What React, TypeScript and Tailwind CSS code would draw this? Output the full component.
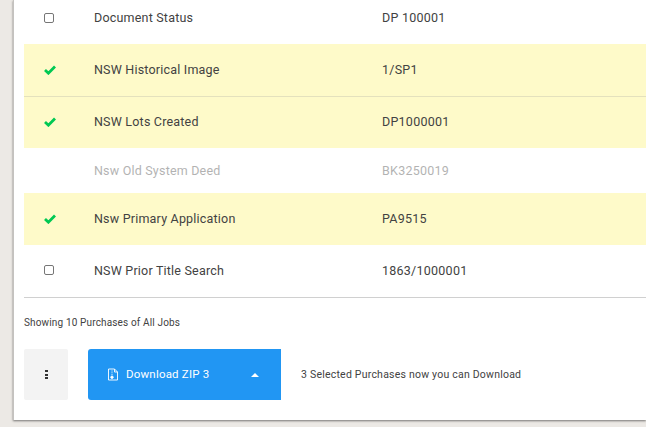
import React from "react";

const Check = () => (
  <svg width="12" height="10" viewBox="0 0 12 10" className="block">
    <path d="M1 5 L4.4 8.2 L11 1.6" fill="none" stroke="#00c853" strokeWidth="2.8" />
  </svg>
);

const Box = () => (
  <div className="w-[10px] h-[10px] rounded-[2px] border border-[#767676] bg-white" />
);

type RowProps = {
  h: string;
  icon: string;
  name: string;
  value: string;
  state: "box" | "check" | "none";
};

const rows: RowProps[] = [
  { h: "h-[44px] pb-[8px]", icon: "", name: "Document Status", value: "DP 100001", state: "box" },
  { h: "h-[53px] bg-[#fefac9] border-b border-[#e4e1bd]", icon: "", name: "NSW Historical Image", value: "1/SP1", state: "check" },
  { h: "h-[51px] bg-[#fefac9]", icon: "mb-[2px]", name: "NSW Lots Created", value: "DP1000001", state: "check" },
  { h: "h-[45px] pt-[1px] opacity-40", icon: "", name: "Nsw Old System Deed", value: "BK3250019", state: "none" },
  { h: "h-[52px] bg-[#fefac9]", icon: "mb-[1px]", name: "Nsw Primary Application", value: "PA9515", state: "check" },
  { h: "h-[53px] border-b border-[#d0d0d0]", icon: "mb-[2px]", name: "NSW Prior Title Search", value: "1863/1000001", state: "box" },
];

export default function App() {
  return (
    <div className="w-[646px] h-[427px] overflow-hidden bg-[#ece9e5] font-['Roboto',sans-serif] text-[12.5px] text-[#424242]">
      <div className="ml-[13px] h-[420px] bg-white border-l border-[#c4c2bf] shadow-[0_1px_2px_rgba(0,0,0,0.5)] pl-[10px]">
        {rows.map((r) => (
          <div key={r.name} className={`flex items-center ${r.h}`}>
            <div className={`w-[70px] flex justify-start pl-[20px] ${r.icon}`}>
              {r.state === "box" && <Box />}
              {r.state === "check" && <Check />}
            </div>
            <div className="w-[288px] tracking-[0.2px]">{r.name}</div>
            <div className="tracking-[0.25px]">{r.value}</div>
          </div>
        ))}
        <div className="text-[10px] tracking-[0.15px] mt-[18px] leading-[14px]">Showing 10 Purchases of All Jobs</div>
        <div className="flex items-center mt-[19px]">
          <div className="w-[44px] h-[51px] bg-[#f3f3f3] rounded-[2px] flex flex-col items-center justify-center gap-[1.5px]">
            <span className="w-[3px] h-[2px] bg-[#333]" />
            <span className="w-[3px] h-[2px] bg-[#333]" />
            <span className="w-[3px] h-[2px] bg-[#333]" />
          </div>
          <div className="ml-[20px] w-[193px] h-[51px] bg-[#2196f3] rounded-l-[3px] text-white flex items-center pl-[21px] text-[11.5px] tracking-[0.2px]">
            <svg width="12" height="13" viewBox="0 0 12 13" fill="none" stroke="#fff" strokeWidth="0.9" className="-ml-[2px] mr-[7px]">
              <path d="M1.5 1h6l3 3v8h-9z" />
              <path d="M7.5 1v3h3" />
              <path d="M5 2.5v5" strokeDasharray="1 0.8" />
              <circle cx="5" cy="9.2" r="1.2" fill="#fff" />
            </svg>
            <span>Download ZIP 3</span>
            <svg width="8" height="4" viewBox="0 0 8 4" className="ml-[42px]">
              <path d="M0 4 L4 0 L8 4 Z" fill="#fff" />
            </svg>
          </div>
          <div className="ml-[20px] text-[10.5px] tracking-[0.22px]">3 Selected Purchases now you can Download</div>
        </div>
      </div>
    </div>
  );
}
